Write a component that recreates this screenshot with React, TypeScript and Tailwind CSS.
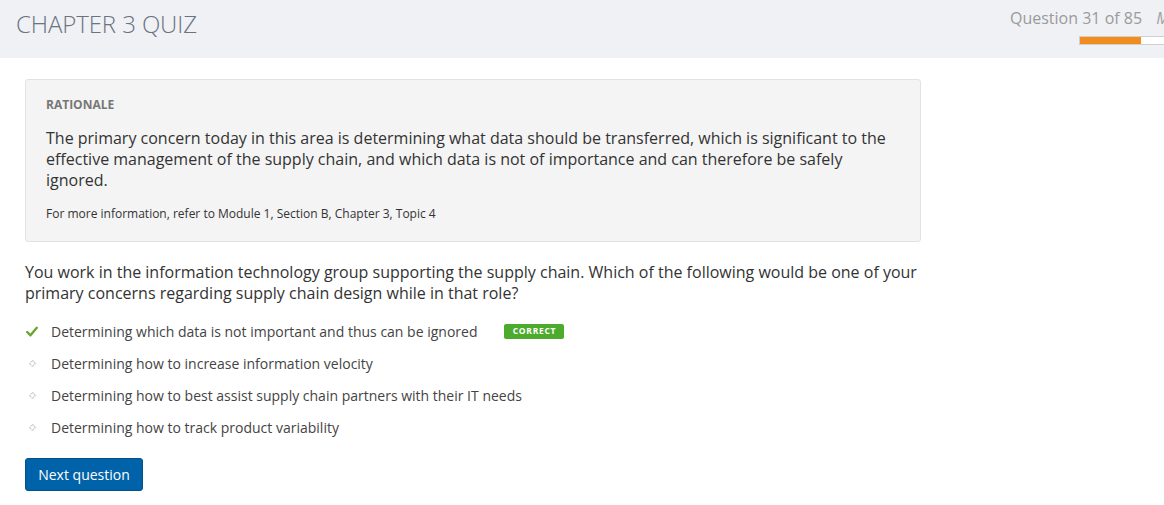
import React from "react";

const font = { fontFamily: '"Open Sans", "Liberation Sans", sans-serif' };

function Check() {
  return (
    <svg width="12" height="11" viewBox="0 0 12 11" className="block">
      <path d="M1.2 6 L4.5 9.3 L10.8 1.8" fill="none" stroke="#6aa533" strokeWidth="2.4" strokeLinecap="round" strokeLinejoin="round" />
    </svg>
  );
}

function Diamond() {
  return (
    <svg width="7" height="7" viewBox="0 0 7 7" className="block">
      <path d="M3.5 0.5 L6.5 3.5 L3.5 6.5 L0.5 3.5 Z" fill="none" stroke="#c8c8c8" strokeWidth="1.2" strokeDasharray="1.4 0.7" />
    </svg>
  );
}

const options = [
  { text: "Determining which data is not important and thus can be ignored", correct: true },
  { text: "Determining how to increase information velocity", correct: false },
  { text: "Determining how to best assist supply chain partners with their IT needs", correct: false },
  { text: "Determining how to track product variability", correct: false },
];

export default function App() {
  return (
    <div className="w-[1164px] h-[505px] bg-white overflow-hidden" style={font}>
      <header className="h-[58px] bg-[#eff1f5] flex overflow-hidden">
        <h1 className="pl-[16px] pt-[7px] text-[24px] leading-[34px] font-light text-[#6b7280] tracking-[-0.1px]">
          CHAPTER 3 QUIZ
        </h1>
        <div className="ml-auto shrink-0 w-[240px] mr-[-86px] pt-[6px]">
          <div className="flex items-center text-[16px] leading-[24px] text-[#9a9a9a]">
            <span>Question 31 of 85</span>
            <span className="ml-[14px] italic text-[#a0a0a0]">Mark</span>
          </div>
          <div className="ml-[69px] mt-[6px] h-[9px] w-[170px] border border-[#d0d0d0] bg-white flex">
            <div className="h-full w-[61px] bg-[#f28c1e]" />
          </div>
        </div>
      </header>

      <main className="pl-[25px] pt-[21px] w-[921px]">
        <section className="border border-[#e2e2e2] bg-[#f4f4f4] rounded-[3px] px-[20px] pt-[17px] pb-[19px]">
          <div className="text-[12px] leading-[16px] font-bold text-[#777]">RATIONALE</div>
          <p className="mt-[15px] text-[16px] leading-[21px] text-[#333] pr-[10px]">
            The primary concern today in this area is determining what data should be transferred, which is significant to the effective management of the supply chain, and which data is not of importance and can therefore be safely ignored.
          </p>
          <p className="mt-[15px] text-[12px] leading-[16px] text-[#333]">
            For more information, refer to Module 1, Section B, Chapter 3, Topic 4
          </p>
        </section>

        <p className="mt-[20px] text-[16px] leading-[21px] text-[#333]">
          You work in the information technology group supporting the supply chain. Which of the following would be one of your primary concerns regarding supply chain design while in that role?
        </p>

        <ul className="mt-[11px]">
          {options.map((o) => (
            <li key={o.text} className="h-[32px] flex items-center text-[14px] text-[#444]">
              <span className="w-[26px] flex justify-start pl-[1px]">
                {o.correct ? <Check /> : <span className="pl-[3px]"><Diamond /></span>}
              </span>
              <span>{o.text}</span>
              {o.correct && (
                <span className="ml-[27px] h-[15px] w-[60px] justify-center rounded-[2px] bg-[#4caa2c] text-white text-[8.5px] font-bold tracking-[0.7px] flex items-center">
                  CORRECT
                </span>
              )}
            </li>
          ))}
        </ul>

        <button className="mt-[15px] h-[33px] w-[118px] rounded-[3px] bg-[#0062a8] border border-[#00508a] text-white text-[14px]">
          Next question
        </button>
      </main>
    </div>
  );
}
